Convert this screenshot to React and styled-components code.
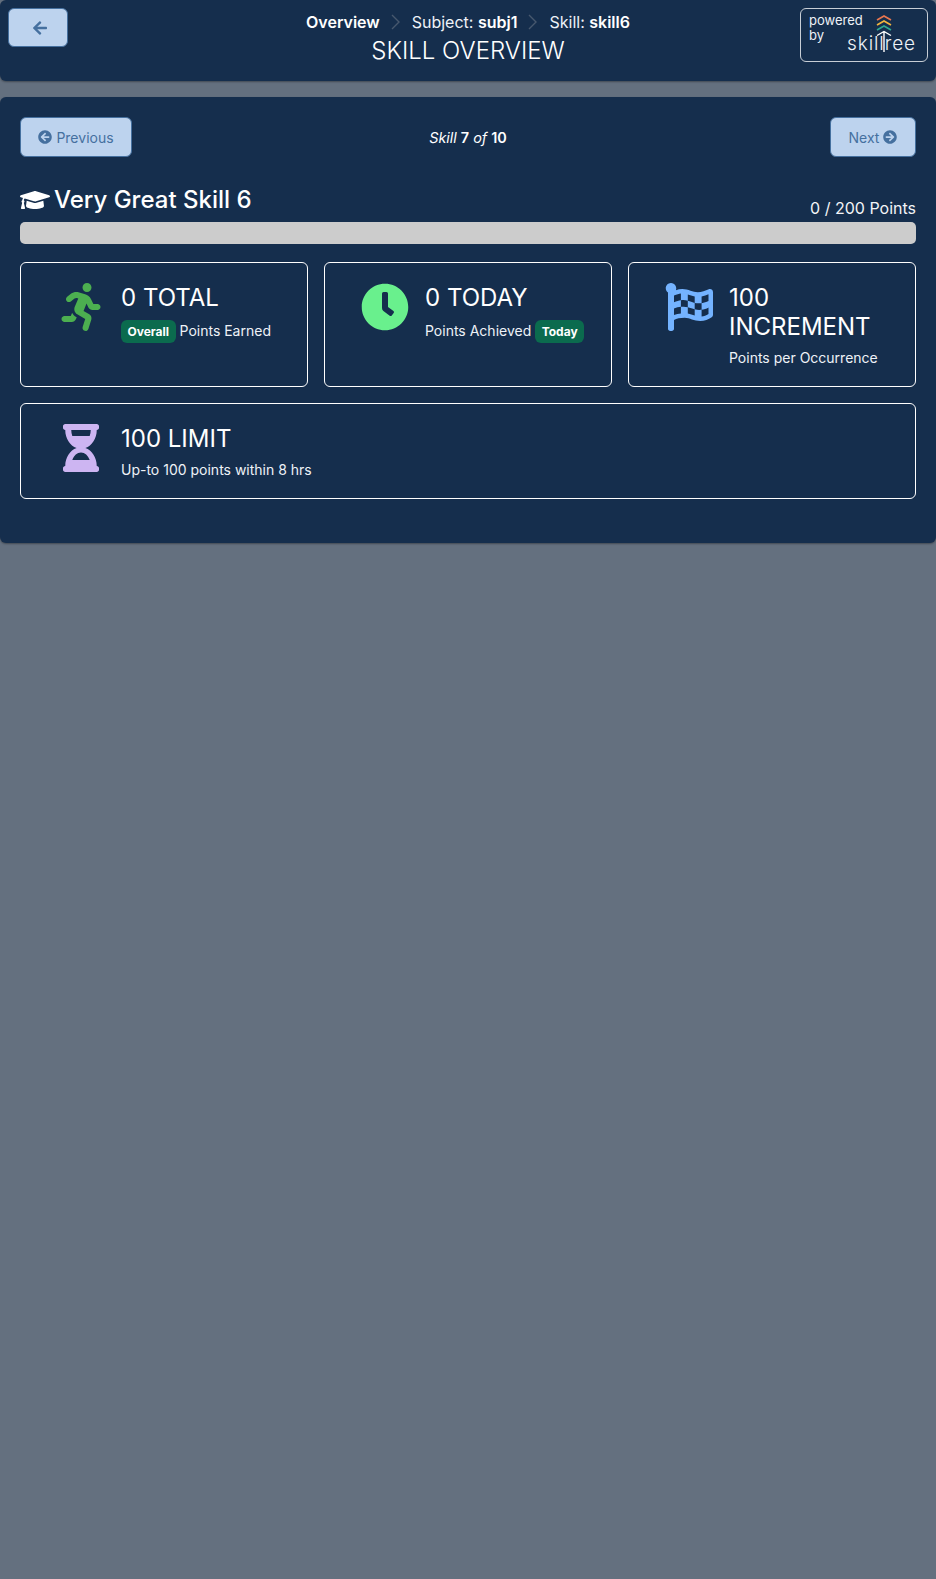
import React from 'react';
import styled, { createGlobalStyle } from 'styled-components';
import { FaArrowLeft, FaArrowCircleLeft, FaArrowCircleRight, FaGraduationCap, FaRunning, FaClock, FaFlagCheckered, FaHourglassHalf } from 'react-icons/fa';

const Global = createGlobalStyle`
  html, body { margin: 0; padding: 0; background: #64707f; }
  body { font-family: Inter, "Liberation Sans", sans-serif; color: #fff; min-height: 1579px; }
  * { box-sizing: border-box; }
`;

const Header = styled.header`
  display: grid; grid-template-columns: 128px 1fr 128px; height: 81px; background: #152e4d;
  border-radius: 6px; padding: 8px 8px 0; box-shadow: 0 1px 2px rgba(0,0,0,.35); margin-bottom: 16px;
`;
const LightButton = styled.button`
  display: inline-flex; align-items: center; justify-content: center; gap: 4px; background: #bdd3ee;
  border: 1px solid #45709f; border-radius: 6px; color: #45709f; height: 40px; font: 400 14px Inter, sans-serif; padding: 0;
  width: ${p => p.$w}px;
`;
const BackButton = styled(LightButton)`height: 39px; padding-left: 4px;`;
const Center = styled.div`display: flex; flex-direction: column; align-items: center; padding-top: 4px;`;
const Crumbs = styled.div`display: flex; align-items: center; font-size: 16px; line-height: 20px; color: #eef2f7; b { font-weight: 600; color: #fff; }`;
const Sep = styled.svg`width: 14px; height: 16px; margin: 0 9px; fill: none; stroke: #47586e; stroke-width: 1.4;`;
const PageTitle = styled.h1`margin: 3px 0 0; font-size: 24px; line-height: 32px; font-weight: 300;`;
const Powered = styled.div`
  display: flex; width: 128px; height: 54px; border: 1px solid #c8ced6; border-radius: 6px; padding: 4px 8px;
  font-size: 13px; line-height: 15px; color: #eef2f7;
`;
const PoweredText = styled.div`width: 52px; flex: none;`;
const PoweredLine = styled.span`display: block;`;
const Logo = styled.div`display: flex; flex-direction: column; align-items: center; margin-left: -14px; width: 69px; flex: none;`;
const LogoMarkSvg = styled.svg`display: block; margin: 1px 0 0 4px; flex: none;`;
const LogoWord = styled.div`
  display: flex; justify-content: space-between; width: 100%; font-size: 19px; font-weight: 300; line-height: 18px;
  letter-spacing: .9px; white-space: nowrap; margin-top: -17px;
`;

const Card = styled.main`
  background: #152e4d; border-radius: 6px; height: 446px; padding: 20px; box-shadow: 0 1px 2px rgba(0,0,0,.35);
`;
const Nav = styled.nav`display: grid; grid-template-columns: 1fr auto 1fr; align-items: center; margin-bottom: 28px;`;
const NavEnd = styled.div`display: flex; justify-content: ${p => p.$right ? 'flex-end' : 'flex-start'};`;
const Counter = styled.div`font-size: 14.4px; i { font-style: italic; } b { font-weight: 600; }`;
const TitleRow = styled.div`display: flex; justify-content: space-between; align-items: flex-end; margin-bottom: 7px;`;
const SkillTitle = styled.h2`margin: 0; display: flex; align-items: center; gap: 4px; font-size: 24px; line-height: 30px; font-weight: 500;`;
const PointsText = styled.div`font-size: 16px; line-height: 22px; color: #f2f4f7; margin-bottom: -4px;`;
const Bar = styled.div`height: 22px; background: #cccccc; border-radius: 5px; margin-bottom: 18px;`;
const Grid = styled.div`display: grid; grid-template-columns: repeat(3, 1fr); gap: 16px;`;
const Stat = styled.section`
  display: flex; grid-column: ${p => p.$wide ? '1 / -1' : 'auto'}; border: 1px solid #fff; border-radius: 6px;
  height: ${p => p.$wide ? 96 : 125}px; padding: 20px 20px 0;
`;
const IconCol = styled.div`width: 80px; flex: none; display: flex; justify-content: center; font-size: 48px; line-height: 0; color: ${p => p.$c};`;
const StatTitle = styled.div`font-size: 24px; line-height: 29px; font-weight: 400; color: #fff;`;
const StatSub = styled.div`font-size: 14px; line-height: 21px; margin-top: ${p => p.$badge ? 8 : 6}px; color: #eef2f7;`;
const Badge = styled.span`
  display: inline-block; background: #0b6b4e; color: #fff; font-size: 12px; font-weight: 700; line-height: 15px;
  padding: 4px 6.5px; border-radius: 6px;
`;

const Chevron = () => <Sep viewBox="0 0 14 16"><path d="M3 1l7 7-7 7" /></Sep>;

const LogoMark = () => (
  <LogoMarkSvg width="16" height="38" viewBox="0 0 16 38" fill="none" strokeWidth="1.7">
    <path d="M1 6l7-4 7 4" stroke="#e8764f" />
    <path d="M1 11l7-4 7 4" stroke="#f1b53d" />
    <path d="M1 16l7-4 7 4" stroke="#2fa890" />
    <path d="M1 21.500l7-4 7 4M8 18v20" stroke="#ffffff" strokeWidth="1.4" />
  </LogoMarkSvg>
);

export default function App() {
  return (
    <>
      <Global />
      <Header>
        <div><BackButton $w={60}><FaArrowLeft size={16} /></BackButton></div>
        <Center>
          <Crumbs>
            <b>Overview</b><Chevron />
            <span>Subject: <b>subj1</b></span><Chevron />
            <span>Skill: <b>skill6</b></span>
          </Crumbs>
          <PageTitle>SKILL OVERVIEW</PageTitle>
        </Center>
        <Powered>
          <PoweredText><PoweredLine>powered</PoweredLine><PoweredLine>by</PoweredLine></PoweredText>
          <Logo><LogoMark /><LogoWord><span>skill</span><span>ree</span></LogoWord></Logo>
        </Powered>
      </Header>
      <Card>
        <Nav>
          <NavEnd><LightButton $w={112}><FaArrowCircleLeft size={14} /> Previous</LightButton></NavEnd>
          <Counter><i>Skill</i> <b>7</b> <i>of</i> <b>10</b></Counter>
          <NavEnd $right><LightButton $w={86}>Next <FaArrowCircleRight size={14} /></LightButton></NavEnd>
        </Nav>
        <TitleRow>
          <SkillTitle><FaGraduationCap size={30} /> Very Great Skill 6</SkillTitle>
          <PointsText>0 / 200 Points</PointsText>
        </TitleRow>
        <Bar />
        <Grid>
          <Stat>
            <IconCol $c="#4caf50"><FaRunning /></IconCol>
            <div><StatTitle>0 TOTAL</StatTitle><StatSub $badge><Badge>Overall</Badge> Points Earned</StatSub></div>
          </Stat>
          <Stat>
            <IconCol $c="#69f08d"><FaClock /></IconCol>
            <div><StatTitle>0 TODAY</StatTitle><StatSub $badge>Points Achieved <Badge>Today</Badge></StatSub></div>
          </Stat>
          <Stat>
            <IconCol $c="#74b3ff"><FaFlagCheckered /></IconCol>
            <div><StatTitle>100 INCREMENT</StatTitle><StatSub>Points per Occurrence</StatSub></div>
          </Stat>
          <Stat $wide>
            <IconCol $c="#cdb5f2"><FaHourglassHalf /></IconCol>
            <div><StatTitle>100 LIMIT</StatTitle><StatSub>Up-to 100 points within 8 hrs</StatSub></div>
          </Stat>
        </Grid>
      </Card>
    </>
  );
}
